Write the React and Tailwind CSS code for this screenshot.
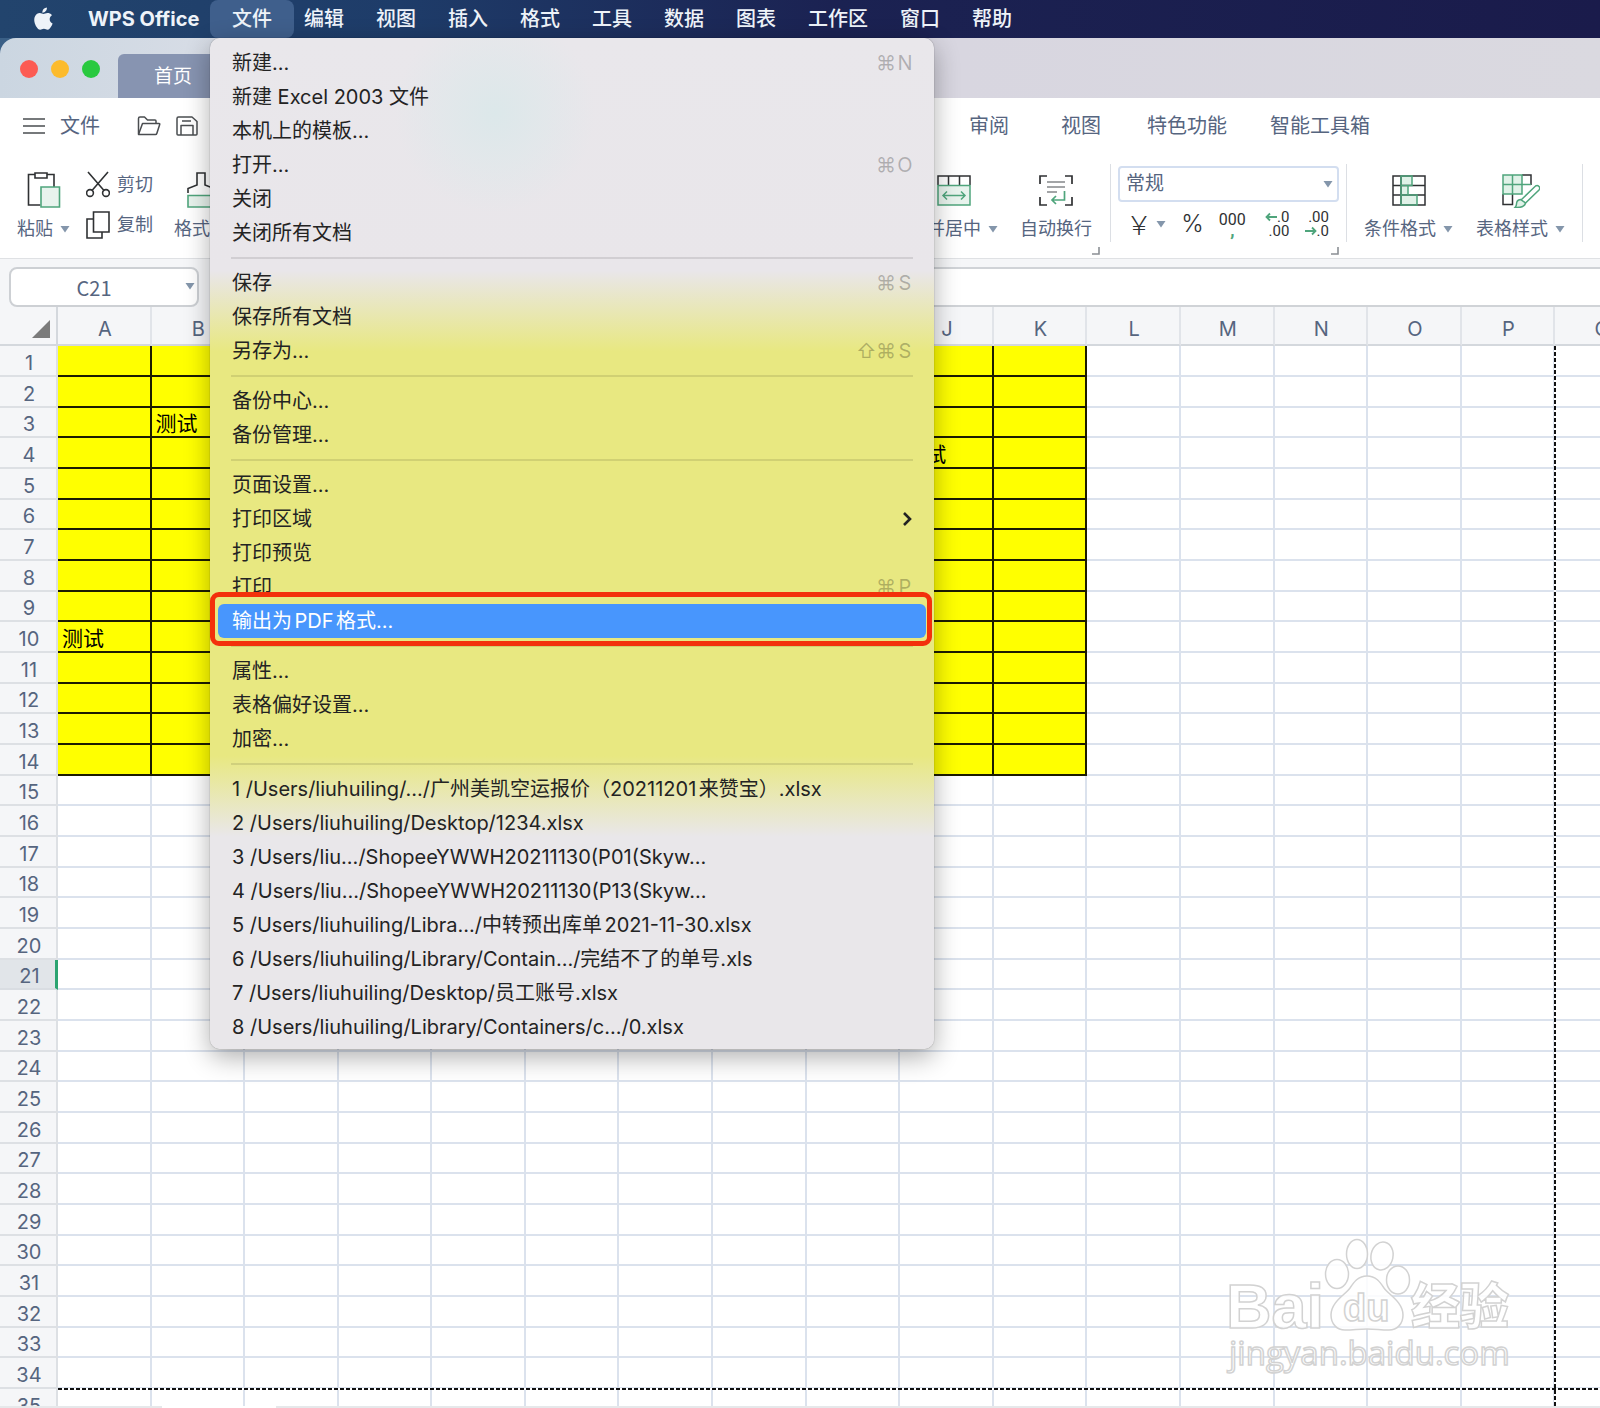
import React from "react";

const COLUMNS = "ABCDEFGHIJKLMNOPQ".split("");
const ROWS = Array.from({ length: 36 }, (_, i) => i + 1);

// Filled block is A1:K14
const FILLED_COLS = 11;
const FILLED_ROWS = 14;
const ACTIVE_ROW = 21;

const CELLS = { B3: "测试", J4: "测试", A10: "测试" };

const APP_MENUS = ["编辑", "视图", "插入", "格式", "工具", "数据", "图表", "工作区", "窗口", "帮助"];

const FILE_MENU = [
  [
    { label: "新建...", keys: ["⌘", "N"] },
    { label: "新建 Excel 2003 文件" },
    { label: "本机上的模板..." },
    { label: "打开...", keys: ["⌘", "O"] },
    { label: "关闭" },
    { label: "关闭所有文档" },
  ],
  [
    { label: "保存", keys: ["⌘", "S"] },
    { label: "保存所有文档" },
    { label: "另存为...", keys: ["⇧", "⌘", "S"] },
  ],
  [{ label: "备份中心..." }, { label: "备份管理..." }],
  [
    { label: "页面设置..." },
    { label: "打印区域", submenu: true },
    { label: "打印预览" },
    { label: "打印", keys: ["⌘", "P"] },
    { label: "输出为PDF格式...", active: true },
  ],
  [{ label: "属性..." }, { label: "表格偏好设置..." }, { label: "加密..." }],
  [
    { label: "1 /Users/liuhuiling/.../广州美凯空运报价（20211201来赞宝）.xlsx" },
    { label: "2 /Users/liuhuiling/Desktop/1234.xlsx" },
    { label: "3 /Users/liu.../ShopeeYWWH20211130(P01(Skyw..." },
    { label: "4 /Users/liu.../ShopeeYWWH20211130(P13(Skyw..." },
    { label: "5 /Users/liuhuiling/Libra.../中转预出库单2021-11-30.xlsx" },
    { label: "6 /Users/liuhuiling/Library/Contain.../完结不了的单号.xls" },
    { label: "7 /Users/liuhuiling/Desktop/员工账号.xlsx" },
    { label: "8 /Users/liuhuiling/Library/Containers/c.../0.xlsx" },
  ],
];

const Caret = () => (
  <svg className="w-2.5 h-2 shrink-0" viewBox="0 0 10 8" fill="#8496ab">
    <path d="M0.5 1h9L5 7.5z" />
  </svg>
);

const AppleLogo = () => (
  <svg className="w-5 h-6" viewBox="0 0 20 24" fill="#eef3f9">
    <path d="M13.9 0.4c.2 1.4-.4 2.700-1.200 3.700-.8 1-2.100 1.700-3.300 1.600-.2-1.300.4-2.700 1.200-3.600C11.400 1.100 12.800.5 13.900.4z" />
    <path d="M19 8.300c-1.500.9-2.300 2.200-2.300 3.900 0 2 1.100 3.500 2.900 4.200-.4 1.200-.9 2.300-1.600 3.400-.9 1.400-1.900 2.900-3.400 2.900s-1.900-.9-3.700-.9c-1.700 0-2.200.9-3.700.9-1.500.1-2.600-1.400-3.600-2.800C1.700 17.200.2 12.300 2.200 8.900c1-1.700 2.700-2.800 4.600-2.800 1.500 0 2.900 1 3.700 1 .9 0 2.600-1.200 4.400-1 .8 0 2.800.3 4.100 2.200z" />
  </svg>
);

const FolderIcon = () => (
  <svg className="w-6 h-5" viewBox="0 0 24 20" fill="none" stroke="#4a4d50" strokeWidth="1.500" strokeLinejoin="round">
    <path d="M1.500 18V2.500Q1.500 1 3 1h4.500l3 3H18q1 0 1 1v2.500" />
    <path d="M1.500 18.500 5.500 7.500H22q1 0 .7 1l-2.900 9q-.3 1-1.300 1z" />
  </svg>
);

const SaveIcon = () => (
  <svg className="w-[22px] h-5" viewBox="0 0 22 20" fill="none" stroke="#4a4d50" strokeWidth="1.500" strokeLinejoin="round">
    <path d="M2.500 1H16l5 4.500V18q0 1-1 1H2q-1 0-1-1V2.500Q1 1 2.500 1z" />
    <path d="M5 19V9.500h12V19M6 5h9" />
  </svg>
);

const PasteIcon = () => (
  <svg className="w-[34px] h-9" viewBox="0 0 34 36" fill="none" strokeWidth="1.600">
    <path d="M8 2.500H1.500V33h12M20 2.500h7V15" stroke="#2f3133" />
    <path d="M8 1h12v5H8z" stroke="#2f3133" />
    <path d="M14 15h18.500v20H14z" stroke="#4fa57c" fill="#e8f3ed" />
  </svg>
);

const CutIcon = () => (
  <svg className="w-6 h-7" viewBox="0 0 24 28" fill="none" stroke="#2f3133" strokeWidth="1.600">
    <path d="M2 1 18 19.500M22 1 6 19.500" />
    <circle cx="4" cy="22" r="3.400" />
    <circle cx="20" cy="22" r="3.400" />
  </svg>
);

const CopyIcon = () => (
  <svg className="w-6 h-7" viewBox="0 0 24 28" fill="none" stroke="#2f3133" strokeWidth="1.600">
    <path d="M7 8H1v19h15v-6" />
    <path d="M7.500 1H23v20H7.500z" />
  </svg>
);

const BrushIcon = () => (
  <svg className="w-7 h-9" viewBox="0 0 28 36" fill="none" strokeWidth="1.600">
    <path d="M1 21v-4.500l9-3.500V1h8v12l9 3.500V21" stroke="#2f3133" />
    <path d="M1 23.500h26V35H1z" stroke="#4fa57c" fill="#e8f3ed" />
  </svg>
);

const MergeIcon = () => (
  <svg className="w-[34px] h-9" viewBox="0 0 34 36" fill="none" strokeWidth="1.500">
    <path d="M1 13V4h32v9M11.500 4v9M22.500 4v9" stroke="#2f3133" />
    <path d="M1 13.500h32V33H1z" stroke="#4fa57c" fill="#e8f3ed" />
    <path d="M6 23.500h22M10 19.500l-4 4 4 4M24 19.500l4 4-4 4" stroke="#4fa57c" />
  </svg>
);

const WrapIcon = () => (
  <svg className="w-[34px] h-9" viewBox="0 0 34 36" fill="none" strokeWidth="1.700">
    <path d="M8 4H1v8M26 4h7v8M8 33H1v-8M26 33h7v-8" stroke="#2f3133" />
    <path d="M8 10h18M8 15h18M8 20h10" stroke="#85888b" />
    <path d="M25.500 19v9H13M17 24l-4 4 4 4" stroke="#4fa57c" />
  </svg>
);

const ConditionIcon = () => (
  <svg className="w-[34px] h-9" viewBox="0 0 34 36" fill="none" strokeWidth="1.500">
    <path d="M9 4h11v9.500H9zM9 13.500h7V23H9zM9 23h16v10H9z" fill="#e0f2e8" />
    <path d="M1 4h32v29H1zM1 13.500h32M1 23h32M9 4v29" stroke="#2f3133" />
    <path d="M9 4h11v9.500H9zM9 13.500h7V23H9zM9 23h16v10H9z" stroke="#4fa57c" />
  </svg>
);

const TableStyleIcon = () => (
  <svg className="w-[38px] h-9" viewBox="0 0 38 36" fill="none" strokeWidth="1.500">
    <path d="M20 3h9v10M1 22v10.500h9.500V22" stroke="#2f3133" />
    <path d="M1 3h19v19H1z" fill="#e0f2e8" />
    <path d="M1 3h19v19H1zM10.500 3v19M1 12.500h28M20 12.500v9.500" stroke="#4fa57c" />
    <path d="M19 28 33.500 14q2-1 3.500.5t0 3.500L23.500 31z" fill="#fff" stroke="#4fa57c" />
    <path d="M18.500 27.500q-4 .5-4 4.500 0 2-1.500 3.500 9.500.5 10.500-4.500z" fill="#e0f2e8" stroke="#4fa57c" />
  </svg>
);

const Arrow = ({ left }) => (
  <svg className="w-3 h-2.5" viewBox="0 0 12 10" fill="none" stroke="#4fa57c" strokeWidth="1.800">
    <path d={left ? "M12 5H1.500M5 1.500 1.500 5 5 8.500" : "M0 5h10.500M7 1.500 10.500 5 7 8.500"} />
  </svg>
);

const Corner = () => (
  <svg className="absolute top-[83px] right-0 w-2 h-2" viewBox="0 0 8 8" fill="none" stroke="#8b8f94" strokeWidth="1.600">
    <path d="M7 0v7H0" />
  </svg>
);

const Divider = () => <div className="w-px h-[78px] bg-[#dcdfe4] shrink-0" />;

function Tool({ icon, label, caret }) {
  return (
    <button className="flex flex-col items-center pt-2 shrink-0">
      {icon}
      <span className="flex items-center gap-[7px] h-6 mt-[9px] text-lg whitespace-nowrap">
        {label}
        {caret && <Caret />}
      </span>
    </button>
  );
}

function MenuItem({ item }) {
  if (item.active) {
    return (
      <li className="relative mx-2">
        <button className="block w-full h-[34px] px-3.5 rounded-md bg-[#4896fd] text-white text-left">{item.label}</button>
        <span className="absolute -left-2 -right-1.5 -top-3 -bottom-2 border-[5px] border-[#f3300b] rounded-[9px] pointer-events-none" />
      </li>
    );
  }
  return (
    <li className="mx-2">
      <button className="flex w-full h-[34px] pl-3.5 pr-3 items-center justify-between text-left whitespace-nowrap">
        <span>{item.label}</span>
        {item.keys && (
          <span className="flex gap-0.5 text-black/25">
            {item.keys.map((k) => (
              <kbd key={k} className="w-[18px] text-center font-['Inter','Noto_Sans_CJK_SC','DejaVu_Sans',sans-serif]">
                {k}
              </kbd>
            ))}
          </span>
        )}
        {item.submenu && (
          <svg className="w-3 h-4" viewBox="0 0 12 16" fill="none" stroke="#222" strokeWidth="2.600">
            <path d="M2 2 8 8l-6 6" />
          </svg>
        )}
      </button>
    </li>
  );
}

function FileMenu() {
  return (
    <div className="absolute top-full left-0 w-[724px] pt-2 pb-[5px] rounded-[10px] bg-[radial-gradient(circle_at_285px_75px,#dce8ea_0,#dce8ea00_100px),linear-gradient(#e9e7eb_0,#e9e6ea_23%,#e8e881_31%,#e8e881_71%,#e9e7ea_79%,#e9e7ea_100%)] shadow-[0_0_1px_rgba(0,0,0,0.6),0_8px_26px_rgba(0,0,0,0.32)] text-[#232323] text-xl font-normal [text-autospace:normal]">
      {FILE_MENU.map((group, i) => (
        <ul key={i}>
          {i > 0 && (
            <li className="h-4 flex items-center px-[21px]">
              <hr className="w-full border-t-2 border-black/10" />
            </li>
          )}
          {group.map((item) => <MenuItem key={item.label} item={item} />)}
        </ul>
      ))}
    </div>
  );
}

function MenuBar() {
  return (
    <nav className="relative z-20 flex items-center h-[38px] shrink-0 pl-[33px] text-xl font-medium text-[#eef3f9] bg-[linear-gradient(90deg,#22446d_0,#1e3c69_25%,#1b2252_52%,#1a1b4b_100%)]">
      <button aria-label="Apple"><AppleLogo /></button>
      <button className="ml-[35px] w-[122px] text-left font-bold whitespace-nowrap">WPS Office</button>
      <div className="relative h-full">
        <button className="h-full w-[84px] rounded-lg bg-[#3f5f8c]">文件</button>
        <FileMenu />
      </div>
      <div className="flex ml-2.5 gap-8">
        {APP_MENUS.map((m) => <button key={m} className="whitespace-nowrap">{m}</button>)}
      </div>
    </nav>
  );
}

function TitleBar() {
  return (
    <div className="bg-[#3a5f86] shrink-0">
      <div className="flex h-[60px] pl-5 rounded-tl-2xl bg-[linear-gradient(90deg,#cbd6e1_0,#d8dde6_14%,#d8d6e0_60%,#dad9e0_100%)]">
        <div className="flex items-center gap-[13px] pt-0.5">
          <span className="size-[18px] rounded-full bg-[#fc5b53]" />
          <span className="size-[18px] rounded-full bg-[#fcbb2d]" />
          <span className="size-[18px] rounded-full bg-[#29c93f]" />
        </div>
        <button className="self-end ml-[18px] h-11 w-36 pl-9 pt-0.5 text-left rounded-t-md bg-[#8794b1] text-white text-[19px]">首页</button>
      </div>
    </div>
  );
}

function Ribbon() {
  return (
    <div className="shrink-0 bg-white text-[#56657f] border-b border-[#dfe1e4]">
      <div className="flex items-center h-[54px] pl-[23px] pt-0.5 text-xl">
        <button className="flex items-center gap-[15px]">
          <svg className="w-[22px] h-4" viewBox="0 0 22 16" stroke="#4a4d50" strokeWidth="1.500">
            <path d="M0 1h22M0 8h22M0 15h22" />
          </svg>
          文件
        </button>
        <button aria-label="打开" className="ml-[37px]"><FolderIcon /></button>
        <button aria-label="保存" className="ml-[15px]"><SaveIcon /></button>
        <div className="flex ml-[771px] whitespace-nowrap">
          <button>审阅</button>
          <button className="ml-[52px]">视图</button>
          <button className="ml-[46px]">特色功能</button>
          <button className="ml-[43px]">智能工具箱</button>
        </div>
      </div>

      <div className="flex items-start h-[106px] pt-3 pl-[17px]">
        <Tool icon={<PasteIcon />} label="粘贴" caret />
        <div className="flex flex-col gap-3 ml-4 pt-[7px] text-lg shrink-0">
          <button className="flex items-center gap-[7px] h-7"><CutIcon />剪切</button>
          <button className="flex items-center gap-[7px] h-7"><CopyIcon />复制</button>
        </div>
        <div className="ml-[21px] mr-[681px] shrink-0">
          <Tool icon={<BrushIcon />} label="格式刷" />
        </div>
        <div className="relative flex gap-[22px] pr-2 shrink-0">
          <Tool icon={<MergeIcon />} label="合并居中" caret />
          <Tool icon={<WrapIcon />} label="自动换行" />
          <Corner />
        </div>
        <div className="ml-2.5"><Divider /></div>
        <div className="relative w-[221px] mx-[7px] pt-0.5 shrink-0">
          <div className="relative">
            <select aria-label="数字格式" className="appearance-none block w-full h-9 pl-1.5 pt-px rounded border-2 border-[#d3def0] bg-white text-[19px]">
              <option>常规</option>
            </select>
            <span className="absolute right-1.5 top-3.5 pointer-events-none"><Caret /></span>
          </div>
          <div className="flex items-center justify-between h-6 mt-2.5 pl-2 pr-2.5 text-[#2f3133]">
            <button className="flex items-center gap-1 text-[26px] leading-6 font-light font-['Noto_Sans_CJK_SC',sans-serif]">
              ￥<Caret />
            </button>
            <button className="text-2xl leading-6 font-light">%</button>
            <button className="flex flex-col items-center font-['Roboto',sans-serif] text-[16px] leading-[14px]">
              000
              <span className="text-[#4fa57c] font-black leading-2">,</span>
            </button>
            <button className="flex flex-col items-end ml-1 font-['Roboto',sans-serif] text-[15px] leading-[14px]">
              <span className="flex items-center"><Arrow left />.0</span>
              <span>.00</span>
            </button>
            <button className="flex flex-col items-end font-['Roboto',sans-serif] text-[15px] leading-[14px]">
              <span>.00</span>
              <span className="flex items-center"><Arrow />.0</span>
            </button>
          </div>
          <Corner />
        </div>
        <Divider />
        <div className="flex gap-[23px] px-[17px] shrink-0">
          <Tool icon={<ConditionIcon />} label="条件格式" caret />
          <Tool icon={<TableStyleIcon />} label="表格样式" caret />
        </div>
        <Divider />
      </div>
    </div>
  );
}

function FormulaBar() {
  return (
    <div className="flex gap-3 h-12 pt-2 pl-[9px] shrink-0 bg-[#f5f6f8]">
      <div className="relative w-[190px] shrink-0">
        <input
          aria-label="名称框"
          readOnly
          value="C21"
          className="w-full h-10 pr-5 text-center text-xl text-[#56657f] bg-white border-2 border-[#cdd0d4] rounded-lg font-['Noto_Sans_CJK_SC',sans-serif]"
        />
        <span className="absolute right-1 top-[15px]"><Caret /></span>
      </div>
      <input aria-label="编辑栏" className="flex-1 h-10 bg-white border-y-2 border-[#d0d3d7]" />
    </div>
  );
}

function cellClass(row, col) {
  if (row <= FILLED_ROWS && col < FILLED_COLS) {
    return "bg-[#ffff00] border-r-2 border-b-2 border-[#1c1c00] p-0 pt-1 pl-1 text-[21px] leading-6 text-black whitespace-nowrap";
  }
  return "border-r-2 border-b-2 border-[#dbe2ed] p-0";
}

function Sheet() {
  return (
    <div className="relative flex-1 min-h-0 overflow-hidden bg-white">
      <table className="table-fixed w-[calc(100%+49px)] border-separate border-spacing-0">
        <thead>
          <tr className="h-[39px] bg-[#f5f6f8] text-[#56657f] text-xl">
            <th className="w-[58px] p-0 border-r-2 border-b-2 border-[#d4d8dd]">
              <svg className="ml-8 mt-1.5 size-[18px]" viewBox="0 0 18 18" fill="#7b7b7b"><path d="M18 0v18H0z" /></svg>
            </th>
            {COLUMNS.map((c) => (
              <th key={c} className="p-0 pt-1.5 pl-0.5 font-normal border-r-2 border-b-2 border-[#d4d8dd] border-r-[#e1e4e9]">{c}</th>
            ))}
          </tr>
        </thead>
        <tbody>
          {ROWS.map((r) => (
            <tr key={r} className={r % 3 === 0 ? "h-[30px]" : "h-[31px]"}>
              <th
                className={
                  r === ACTIVE_ROW
                    ? "p-0 pt-1 pl-1 text-xl leading-6 font-normal text-[#56657f] bg-[#e1e5e9] border-b-2 border-b-[#d9dde2] border-r-[3px] border-r-[#2ba471]"
                    : "p-0 pt-1 pl-0.5 text-xl leading-6 font-normal text-[#56657f] bg-[#f5f6f8] border-b-2 border-r-2 border-[#dde0e4]"
                }
              >
                {r}
              </th>
              {COLUMNS.map((c, i) => <td key={c} className={cellClass(r, i)}>{CELLS[c + r]}</td>)}
            </tr>
          ))}
        </tbody>
      </table>

      {/* page break guides */}
      <span className="absolute left-[1554px] top-[39px] bottom-0 w-0.5 bg-[repeating-linear-gradient(#111_0_4px,#fff_4px_6px)]" />
      <span className="absolute left-[58px] right-0 top-[1081px] h-0.5 bg-[repeating-linear-gradient(90deg,#111_0_4px,#fff_4px_6px)]" />
      <Watermark />
    </div>
  );
}

function Watermark() {
  return (
    <svg
      className="absolute right-[80px] bottom-[26px] w-[300px] h-[144px]"
      viewBox="40 34 300 144"
      fill="#fff"
      fillOpacity="0.85"
      stroke="#d2d2d2"
      strokeWidth="1.500"
    >
      <text x="46" y="126" className="text-[63px] font-bold font-['Liberation_Sans',sans-serif]">Bai</text>
      <ellipse cx="157" cy="72" rx="11.500" ry="14.500" />
      <ellipse cx="177" cy="52" rx="10.500" ry="14.500" />
      <ellipse cx="202" cy="54" rx="11" ry="14" transform="rotate(12 202 54)" />
      <ellipse cx="218" cy="78" rx="11.500" ry="14" />
      <path d="M187 74c-9 0-13 6-17 12-5 7-19 14-19 27 0 9 6 15 14 15 9 0 13-1 22-1s13 1 22 1c8 0 14-6 14-15 0-13-14-20-19-27-4-6-8-12-17-12z" />
      <text x="163" y="119" className="text-[38px] font-bold font-['Liberation_Sans',sans-serif]">du</text>
      <text x="231" y="122" className="text-[49px] font-black font-['Noto_Sans_CJK_SC',sans-serif]">经验</text>
      <text x="49" y="163" className="text-[33px] font-medium font-['Open_Sans',sans-serif]">jingyan.baidu.com</text>
    </svg>
  );
}

export default function App() {
  return (
    <div className="flex flex-col h-screen overflow-hidden bg-white font-['Inter','Noto_Sans_CJK_SC',sans-serif]">
      <MenuBar />
      <TitleBar />
      <Ribbon />
      <FormulaBar />
      <Sheet />
      <div className="flex h-0.5 shrink-0">
        <span className="w-[162px] bg-[#e6e8ea]" />
        <span className="w-[114px] bg-white" />
        <span className="flex-1 bg-[#e6e8ea]" />
      </div>
    </div>
  );
}
